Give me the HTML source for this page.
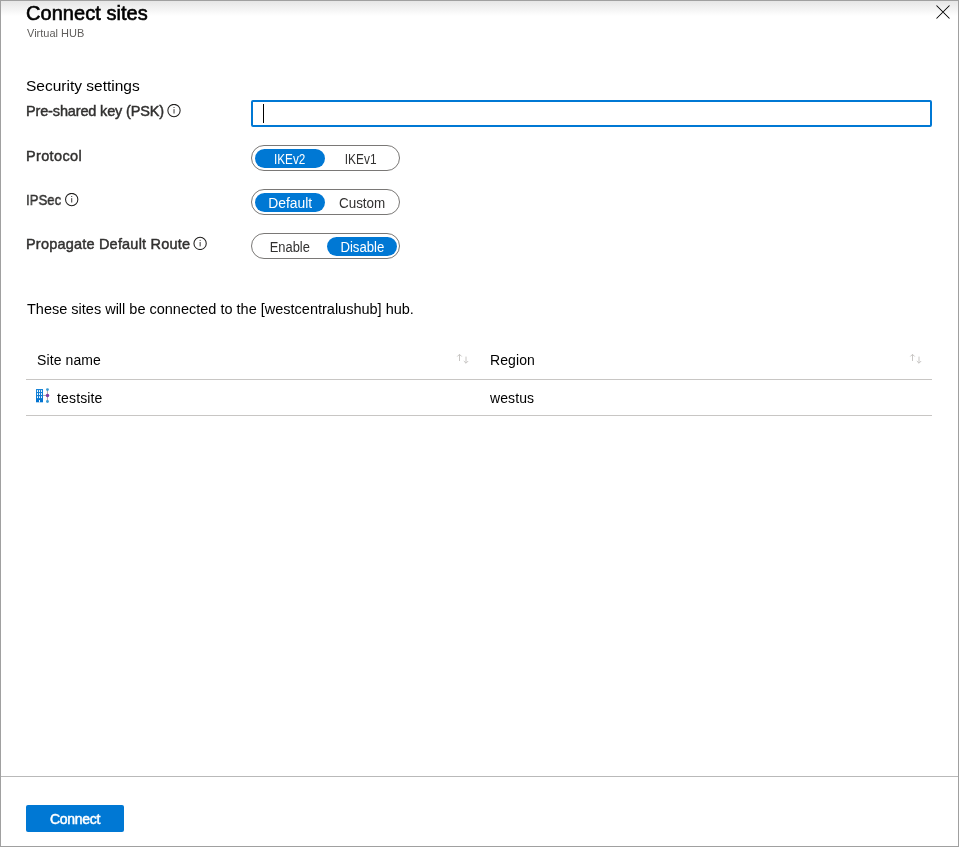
<!DOCTYPE html>
<html><head><meta charset="utf-8">
<style>
html,body{margin:0;padding:0;}
body{width:959px;height:847px;overflow:hidden;background:#fff;position:relative;font-family:"Liberation Sans",sans-serif;color:#323130;}
.a{position:absolute;white-space:nowrap;line-height:1;will-change:transform;}
.frame{position:absolute;left:0;top:0;width:957px;height:845px;border:1px solid #a0a0a0;}
.topgrad{position:absolute;left:1px;top:1px;width:957px;height:15px;background:linear-gradient(#e6e6e6,#ffffff);}
.title{left:26px;top:3px;font-size:20px;font-weight:normal;color:#000;-webkit-text-stroke:0.6px #000;letter-spacing:0.05px;}
.sub{left:27px;top:28px;font-size:11px;color:#605e5c;}
.sec{left:26px;top:78px;font-size:15.5px;color:#000;}
.lbl{font-size:14.5px;font-weight:normal;color:#323130;-webkit-text-stroke:0.45px #323130;}
.info{position:absolute;width:14px;height:14px;}
.input{position:absolute;left:251px;top:100px;width:677px;height:23px;border:2px solid #0078d4;border-radius:2px;}
.caret{position:absolute;left:263px;top:104px;width:1px;height:19px;background:#000;}
.tog{position:absolute;left:251px;width:147px;height:24px;border:1px solid #7a7876;border-radius:13px;}
.opt{position:absolute;will-change:transform;top:3px;width:70px;height:19px;border-radius:10px;font-size:14px;line-height:21px;text-align:center;color:#323130;}
.opt.on{background:#0078d4;color:#fff;}
.txt{font-size:14.5px;color:#000;}
.hline{position:absolute;left:26px;width:906px;height:1px;background:#c8c6c4;}
.sep{position:absolute;left:1px;top:776px;width:957px;height:1px;background:#b9b9b9;}
.btn{position:absolute;will-change:transform;left:26px;top:805px;width:98px;height:27px;background:#0078d4;border-radius:2px;color:#fff;font-weight:normal;font-size:14px;line-height:28px;text-align:center;-webkit-text-stroke:0.5px #fff;letter-spacing:-0.3px;}
</style></head><body>
<div class="frame"></div>
<div class="topgrad"></div>

<div class="a title">Connect sites</div>
<div class="a sub">Virtual HUB</div>
<svg style="position:absolute;left:936px;top:5px" width="14" height="14" viewBox="0 0 14 14"><path d="M0.5 0.5L13.5 13.5M13.5 0.5L0.5 13.5" stroke="#000" stroke-width="1.05" fill="none"/></svg>

<div class="a sec">Security settings</div>

<div class="a lbl" style="left:26px;top:104px;letter-spacing:-0.15px">Pre-shared key (PSK)</div>
<svg class="info" style="left:167px;top:104px" viewBox="0 0 14 14"><circle cx="7" cy="6.5" r="6.15" stroke="#201f1e" stroke-width="1.05" fill="none"/><rect x="6.55" y="5.1" width="0.95" height="4.4" fill="#323130"/><rect x="6.55" y="3.0" width="0.95" height="1" fill="#323130"/></svg>
<div class="input"></div>
<div class="caret"></div>

<div class="a lbl" style="left:26px;top:149px;letter-spacing:0.35px">Protocol</div>
<div class="tog" style="top:145px">
  <div class="opt on" style="left:3px"><span style="display:inline-block;transform:scaleX(0.84)">IKEv2</span></div>
  <div class="opt" style="left:75px;box-sizing:border-box;padding-right:2px"><span style="display:inline-block;transform:scaleX(0.85)">IKEv1</span></div>
</div>

<div class="a lbl" style="left:26px;top:193px;transform:scaleX(0.91);transform-origin:0 0">IPSec</div>
<svg class="info" style="left:65px;top:193px" viewBox="0 0 14 14"><circle cx="6.7" cy="6.5" r="6.15" stroke="#201f1e" stroke-width="1.05" fill="none"/><rect x="6.25" y="5.1" width="0.95" height="4.4" fill="#323130"/><rect x="6.25" y="3.0" width="0.95" height="1" fill="#323130"/></svg>
<div class="tog" style="top:189px">
  <div class="opt on" style="left:3px"><span style="display:inline-block;transform:scaleX(0.99)">Default</span></div>
  <div class="opt" style="left:75px"><span style="display:inline-block;transform:scaleX(0.96)">Custom</span></div>
</div>

<div class="a lbl" style="left:26px;top:237px;letter-spacing:0.2px">Propagate Default Route</div>
<svg class="info" style="left:193px;top:236px" viewBox="0 0 14 14"><circle cx="7.1" cy="7.4" r="6.15" stroke="#201f1e" stroke-width="1.05" fill="none"/><rect x="6.6499999999999995" y="6.0" width="0.95" height="4.4" fill="#323130"/><rect x="6.6499999999999995" y="3.9" width="0.95" height="1" fill="#323130"/></svg>
<div class="tog" style="top:233px">
  <div class="opt" style="left:3px"><span style="display:inline-block;transform:scaleX(0.92)">Enable</span></div>
  <div class="opt on" style="left:75px"><span style="display:inline-block;transform:scaleX(0.94)">Disable</span></div>
</div>

<div class="a txt" style="left:27px;top:302px">These sites will be connected to the [westcentralushub] hub.</div>

<div class="a txt" style="left:37px;top:352.5px;font-size:14px;letter-spacing:0.1px">Site name</div>
<svg style="position:absolute;left:456px;top:353px" width="14" height="11" viewBox="0 0 14 11"><path d="M3.5 1.3V8M1.3 3.5L3.5 1.3L5.7 3.5M10 3.6V10.2M7.8 8L10 10.2L12.2 8" stroke="#c8c6c4" stroke-width="1" fill="none"/></svg>
<div class="a txt" style="left:490px;top:352.5px;font-size:14px;letter-spacing:0.1px">Region</div>
<svg style="position:absolute;left:909px;top:353px" width="14" height="11" viewBox="0 0 14 11"><path d="M3.5 1.3V8M1.3 3.5L3.5 1.3L5.7 3.5M10 3.6V10.2M7.8 8L10 10.2L12.2 8" stroke="#c8c6c4" stroke-width="1" fill="none"/></svg>
<div class="hline" style="top:379px"></div>

<svg style="position:absolute;left:35px;top:388px" width="16" height="16" viewBox="0 0 16 16">
  <defs><linearGradient id="bg" x1="0" y1="0" x2="0" y2="1"><stop offset="0" stop-color="#1a86d8"/><stop offset="1" stop-color="#0072d0"/></linearGradient></defs>
  <rect x="1" y="1" width="7" height="13.3" fill="url(#bg)"/>
  <g fill="#fff"><rect x="2" y="2.1" width="0.95" height="1.9"/><rect x="4" y="2.1" width="0.95" height="1.9"/><rect x="6" y="2.1" width="0.95" height="1.9"/>
  <rect x="2" y="5.1" width="0.95" height="1.9"/><rect x="4" y="5.1" width="0.95" height="1.9"/><rect x="6" y="5.1" width="0.95" height="1.9"/>
  <rect x="2" y="8.2" width="0.95" height="1.9"/><rect x="4" y="8.2" width="0.95" height="1.9"/><rect x="6" y="8.2" width="0.95" height="1.9"/>
  <rect x="4" y="12" width="0.95" height="2.3"/></g>
  <path d="M8 7.45H12.5M12.45 1.5V13.5" stroke="#a19f9d" stroke-width="0.9"/>
  <circle cx="12.45" cy="1.6" r="1.45" fill="#3b9bd3"/>
  <circle cx="12.5" cy="7.45" r="1.75" fill="#7f3fa6"/>
  <circle cx="12.45" cy="13.45" r="1.45" fill="#3b9bd3"/>
</svg>
<div class="a txt" style="left:57px;top:390.5px;font-size:14px;letter-spacing:0.15px">testsite</div>
<div class="a txt" style="left:490px;top:390.5px;font-size:14px;letter-spacing:0.1px">westus</div>
<div class="hline" style="top:415px"></div>

<div class="sep"></div>
<div class="btn">Connect</div>
</body></html>
